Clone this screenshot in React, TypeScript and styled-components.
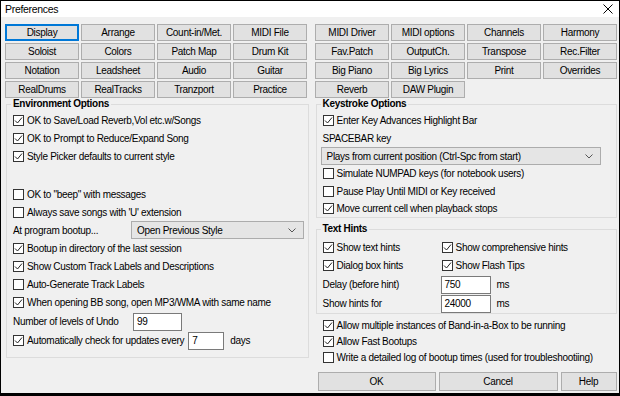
import React from 'react';
import styled, { createGlobalStyle } from 'styled-components';

const FONT = `"Liberation Sans", Arial, sans-serif`;

const GlobalStyle = createGlobalStyle`
  html, body {
    margin: 0;
    padding: 0;
    background: #fff;
  }
  body {
    font-family: ${FONT};
    font-size: 10px;
    letter-spacing: -0.3px;
    color: #000;
  }
`;

const Window = styled.div`
  width: 620px;
  height: 396px;
  box-sizing: border-box;
  border: 1px solid #000;
  border-bottom-width: 3px;
  background: #f0f0f0;
  display: flex;
  flex-direction: column;
  overflow: hidden;
`;

const TitleBar = styled.div`
  height: 16px;
  flex: none;
  background: #fff;
  display: flex;
  align-items: center;
  justify-content: space-between;
  padding: 0 6px 0 4px;
  font-size: 10.5px;
`;

const Body = styled.div`
  flex: 1;
  display: flex;
  flex-direction: column;
  padding: 7px 2px 0 4px;
`;

const TabArea = styled.div`
  display: flex;
  gap: 8px;
`;

const TabGrid = styled.div`
  flex: 1;
  display: grid;
  grid-template-columns: repeat(4, 1fr);
  grid-auto-rows: 17px;
  gap: 2px;
`;

const PageButton = styled.button<{ $focused?: boolean }>`
  margin: 0;
  padding: 0;
  font-family: ${FONT};
  font-size: 10px;
  letter-spacing: -0.3px;
  color: #000;
  background: #e1e1e1;
  border: 1px solid ${(p) => (p.$focused ? '#0078d7' : '#adadad')};
  box-shadow: ${(p) => (p.$focused ? 'inset 0 0 0 1px #0078d7' : 'none')};
  white-space: nowrap;
`;

const Main = styled.div`
  display: flex;
  gap: 7px;
  padding-left: 1px;
`;

const RightColumn = styled.div`
  width: 302px;
  display: flex;
  flex-direction: column;
`;

const Group = styled.fieldset<{ $width?: number; $height: number }>`
  margin: 0;
  min-width: 0;
  box-sizing: border-box;
  width: ${(p) => (p.$width ? `${p.$width}px` : 'auto')};
  height: ${(p) => p.$height}px;
  border: 1px solid #dcdcdc;
  padding: 1px 4px 0 6px;
  display: flex;
  flex-direction: column;
`;

const Legend = styled.legend`
  padding: 0 2px;
  margin-left: -2px;
  font-weight: bold;
  line-height: 12px;
`;

const Row = styled.div<{ $h?: number; $indent?: number }>`
  height: ${(p) => p.$h ?? 18}px;
  display: flex;
  align-items: center;
  white-space: nowrap;
  margin-left: ${(p) => p.$indent ?? 0}px;
`;

const Spacer = styled.div<{ $h: number }>`
  height: ${(p) => p.$h}px;
`;

const Box = styled.span`
  width: 11px;
  height: 11px;
  box-sizing: border-box;
  border: 1px solid #333;
  background: #fff;
  flex: none;
  margin-right: 3px;
  display: flex;
`;

const FieldLabel = styled.span<{ $w?: number }>`
  width: ${(p) => (p.$w ? `${p.$w}px` : 'auto')};
  flex: none;
`;

const Dropdown = styled.div<{ $w: number }>`
  width: ${(p) => p.$w}px;
  height: 18px;
  box-sizing: border-box;
  background: #e5e5e5;
  border: 1px solid #acacac;
  display: flex;
  align-items: center;
  justify-content: space-between;
  padding: 0 7px 0 5px;
`;

const TextField = styled.div<{ $w: number; $gap?: number }>`
  width: ${(p) => p.$w}px;
  height: 18px;
  box-sizing: border-box;
  margin-left: ${(p) => p.$gap ?? 0}px;
  background: #fff;
  border: 1px solid #7a7a7a;
  padding: 0 3px;
  display: flex;
  align-items: center;
  flex: none;
`;

const Unit = styled.span<{ $gap: number }>`
  margin-left: ${(p) => p.$gap}px;
`;

const HintsGrid = styled.div`
  display: grid;
  grid-template-columns: 119px auto;
  grid-template-rows: 18px 19px 19px 19px;
  padding-top: 2px;
`;

const ButtonBar = styled.div`
  display: flex;
  gap: 3px;
  margin: 7px 0 0 2px;
`;

const DialogButton = styled.button<{ $w: number }>`
  width: ${(p) => p.$w}px;
  height: 19px;
  margin: 0;
  padding: 0;
  font-family: ${FONT};
  font-size: 10px;
  letter-spacing: -0.3px;
  color: #000;
  background: #e1e1e1;
  border: 1px solid #adadad;
`;

const Check = ({ checked, children }: { checked?: boolean; children: React.ReactNode }) => (
  <>
    <Box>
      {checked && (
        <svg width="9" height="9" viewBox="0 0 9 9">
          <polyline points="1,4.5 3.5,7 8,1.5" fill="none" stroke="#222" strokeWidth="1" />
        </svg>
      )}
    </Box>
    <span>{children}</span>
  </>
);

const Chevron = () => (
  <svg width="8" height="5" viewBox="0 0 8 5">
    <polyline points="0.5,0.5 4,4 7.5,0.5" fill="none" stroke="#555" strokeWidth="1" />
  </svg>
);

const leftTabs = [
  'Display', 'Arrange', 'Count-in/Met.', 'MIDI File',
  'Soloist', 'Colors', 'Patch Map', 'Drum Kit',
  'Notation', 'Leadsheet', 'Audio', 'Guitar',
  'RealDrums', 'RealTracks', 'Tranzport', 'Practice',
];

const rightTabs = [
  'MIDI Driver', 'MIDI options', 'Channels', 'Harmony',
  'Fav.Patch', 'OutputCh.', 'Transpose', 'Rec.Filter',
  'Big Piano', 'Big Lyrics', 'Print', 'Overrides',
  'Reverb', 'DAW Plugin',
];

export default function App() {
  return (
    <>
      <GlobalStyle />
      <Window>
        <TitleBar>
          <span>Preferences</span>
          <svg width="10" height="10" viewBox="0 0 10 10">
            <path d="M0.5 0.5 L9.5 9.5 M9.5 0.5 L0.5 9.5" stroke="#000" strokeWidth="1" />
          </svg>
        </TitleBar>
        <Body>
          <TabArea>
            <TabGrid>
              {leftTabs.map((t, i) => (
                <PageButton key={t} $focused={i === 0}>{t}</PageButton>
              ))}
            </TabGrid>
            <TabGrid>
              {rightTabs.map((t) => (
                <PageButton key={t}>{t}</PageButton>
              ))}
            </TabGrid>
          </TabArea>

          <Main>
            <Group $width={303} $height={260}>
              <Legend>Environment Options</Legend>
              <Row><Check checked>OK to Save/Load Reverb,Vol etc.w/Songs</Check></Row>
              <Row><Check checked>OK to Prompt to Reduce/Expand Song</Check></Row>
              <Row><Check checked>Style Picker defaults to current style</Check></Row>
              <Spacer $h={20} />
              <Row><Check>OK to "beep" with messages</Check></Row>
              <Row><Check>Always save songs with 'U' extension</Check></Row>
              <Row>
                <FieldLabel $w={118}>At program bootup...</FieldLabel>
                <Dropdown $w={173}>
                  <span>Open Previous Style</span>
                  <Chevron />
                </Dropdown>
              </Row>
              <Row><Check checked>Bootup in directory of the last session</Check></Row>
              <Row><Check checked>Show Custom Track Labels and Descriptions</Check></Row>
              <Row><Check>Auto-Generate Track Labels</Check></Row>
              <Row $h={19}><Check checked>When opening BB song, open MP3/WMA with same name</Check></Row>
              <Row $h={19}>
                <FieldLabel $w={120}>Number of levels of Undo</FieldLabel>
                <TextField $w={49}>99</TextField>
              </Row>
              <Row $h={19}>
                <Check checked>Automatically check for updates every</Check>
                <TextField $w={36} $gap={4}>7</TextField>
                <Unit $gap={6}>days</Unit>
              </Row>
            </Group>

            <RightColumn>
              <Group $height={120}>
                <Legend>Keystroke Options</Legend>
                <Row><Check checked>Enter Key Advances Highlight Bar</Check></Row>
                <Row>SPACEBAR key</Row>
                <Row $indent={-2}>
                  <Dropdown $w={280}>
                    <span>Plays from current position (Ctrl-Spc from start)</span>
                    <Chevron />
                  </Dropdown>
                </Row>
                <Row $h={17}><Check>Simulate NUMPAD keys (for notebook users)</Check></Row>
                <Row><Check>Pause Play Until MIDI or Key received</Check></Row>
                <Row $h={17}><Check checked>Move current cell when playback stops</Check></Row>
              </Group>

              <Group $height={91} style={{ marginTop: 5 }}>
                <Legend>Text Hints</Legend>
                <HintsGrid>
                  <Row><Check checked>Show text hints</Check></Row>
                  <Row><Check checked>Show comprehensive hints</Check></Row>
                  <Row $h={19}><Check checked>Dialog box hints</Check></Row>
                  <Row $h={19}><Check checked>Show Flash Tips</Check></Row>
                  <Row $h={19}>Delay (before hint)</Row>
                  <Row $h={19} $indent={-1}>
                    <TextField $w={50}>750</TextField>
                    <Unit $gap={6}>ms</Unit>
                  </Row>
                  <Row $h={19}>Show hints for</Row>
                  <Row $h={19} $indent={-1}>
                    <TextField $w={50}>24000</TextField>
                    <Unit $gap={6}>ms</Unit>
                  </Row>
                </HintsGrid>
              </Group>

              <Spacer $h={3} />
              <Row $h={16} $indent={7}><Check checked>Allow multiple instances of Band-in-a-Box to be running</Check></Row>
              <Row $h={16} $indent={7}><Check checked>Allow Fast Bootups</Check></Row>
              <Row $h={16} $indent={7}><Check>Write a detailed log of bootup times (used for troubleshootiing)</Check></Row>

              <ButtonBar>
                <DialogButton $w={118}>OK</DialogButton>
                <DialogButton $w={119}>Cancel</DialogButton>
                <DialogButton $w={56}>Help</DialogButton>
              </ButtonBar>
            </RightColumn>
          </Main>
        </Body>
      </Window>
    </>
  );
}
